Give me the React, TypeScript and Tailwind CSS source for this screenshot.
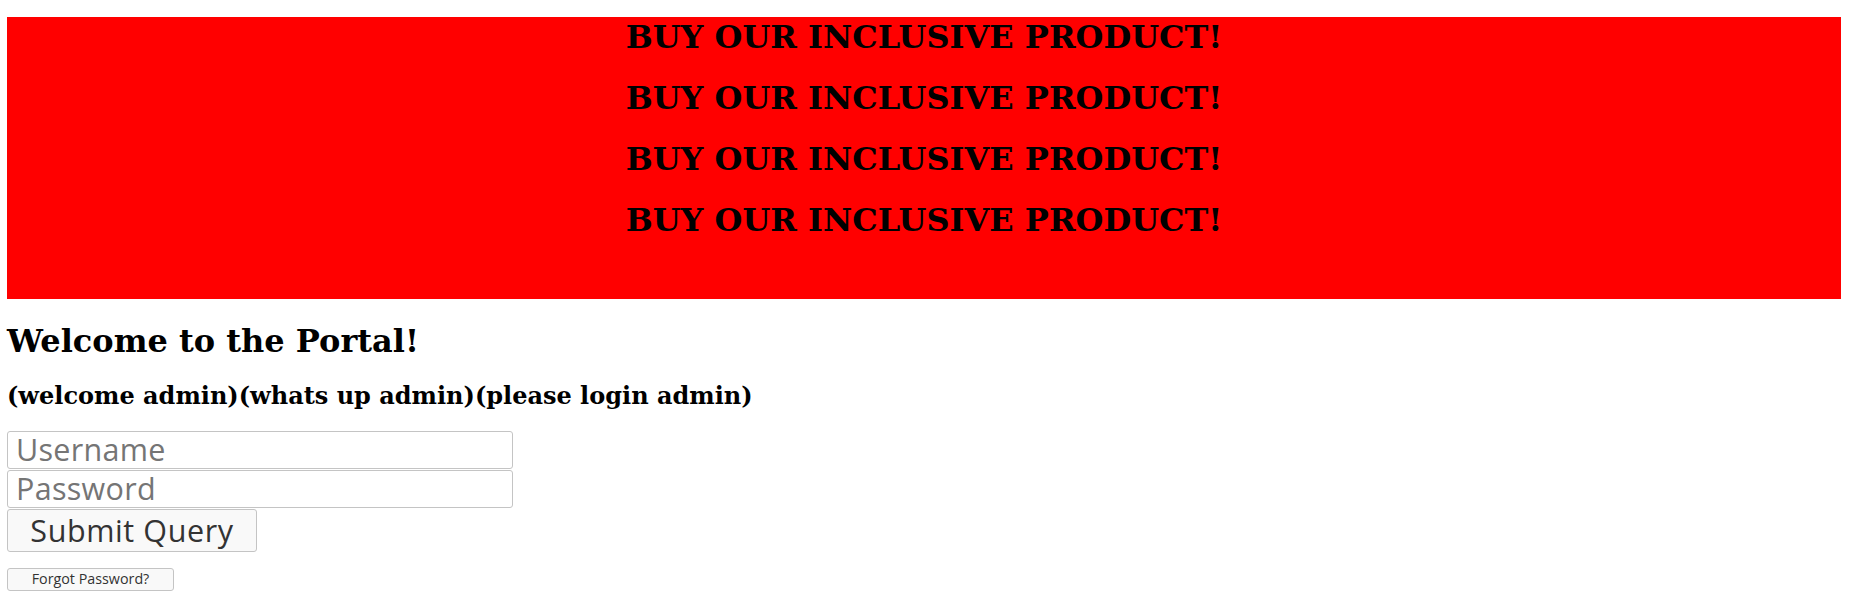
const serif = "font-['DejaVu_Serif','Liberation_Serif',serif] font-bold text-black";

export default function App() {
  const lines = [1, 2, 3, 4];
  return (
    <div className="w-full min-h-[599px] bg-white pt-[17px] pl-[7px] pr-[8px]">
      <div className="h-[282px] bg-[#ff0000] flex flex-col items-center pt-[2px] gap-[24px]">
        {lines.map((i) => (
          <div key={i} className={`${serif} text-[32px] leading-[37px]`}>
            BUY OUR INCLUSIVE PRODUCT!
          </div>
        ))}
      </div>
      <h1 className={`${serif} mt-[24px] text-[32px] leading-[37px]`}>Welcome to the Portal!</h1>
      <h2 className={`${serif} mt-[22px] text-[24px] leading-[28px]`}>
        (welcome admin)(whats up admin)(please login admin)
      </h2>
      <form className="flex flex-col items-start font-['Open_Sans','Noto_Sans',sans-serif]">
        <input
          type="text"
          placeholder="Username"
          className="mt-[21px] block w-[506px] h-[38px] px-[8px] text-[30.5px] tracking-[0.3px] border border-[#c4c4c4] rounded-[3px] bg-white placeholder:text-[#757575] outline-none"
        />
        <input
          type="password"
          placeholder="Password"
          className="mt-[1px] block w-[506px] h-[38px] px-[8px] text-[30.5px] tracking-[0.3px] border border-[#c4c4c4] rounded-[3px] bg-white placeholder:text-[#757575] outline-none"
        />
        <button
          type="button"
          className="mt-[1px] w-[250px] h-[43px] text-[30.5px] tracking-[0.6px] leading-none text-[#333333] bg-[#f9f9f9] border border-[#c4c4c4] rounded-[3px]"
        >
          Submit Query
        </button>
        <button
          type="button"
          className="mt-[16px] w-[167px] h-[23px] text-[14.3px] leading-none text-[#333333] bg-[#f9f9f9] border border-[#c4c4c4] rounded-[3px]"
        >
          Forgot Password?
        </button>
      </form>
    </div>
  );
}
